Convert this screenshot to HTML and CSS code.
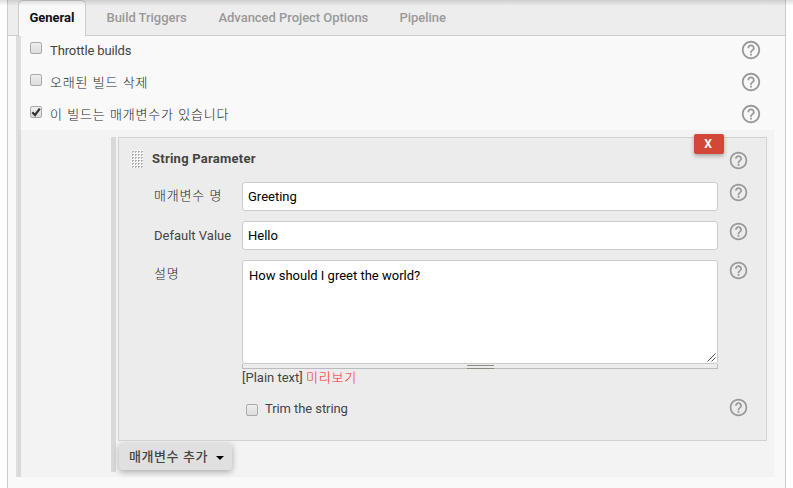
FILE: index.html
```
<!DOCTYPE html>
<html lang="ko">
<head>
<meta charset="utf-8">
<title>Config</title>
<link rel="stylesheet" href="styles.css">
</head>
<body>
<svg class="defs" width="0" height="0"><symbol id="help" viewBox="0 0 24 24"><path d="M11 18h2v-2h-2v2zm1-16C6.48 2 2 6.48 2 12s4.48 10 10 10 10-4.48 10-10S17.52 2 12 2zm0 18c-4.41 0-8-3.59-8-8s3.59-8 8-8 8 3.59 8 8-3.59 8-8 8zm0-14c-2.21 0-4 1.79-4 4h2c0-1.1.9-2 2-2s2 .9 2 2c0 2-3 1.75-3 5h2c0-2.25 3-2.5 3-5 0-2.21-1.79-4-4-4z"/></symbol></svg>
<div class="panel">
  <nav class="tabs">
    <a class="tab active">General</a>
    <a class="tab triggers">Build Triggers</a>
    <a class="tab advanced">Advanced Project Options</a>
    <a class="tab">Pipeline</a>
  </nav>
  <main class="config">
    <div class="option"><span class="check"></span><span class="name throttle">Throttle builds</span><svg class="help"><use href="#help"/></svg></div>
    <div class="option"><span class="check"></span><span class="name ko">오래된 빌드 삭제</span><svg class="help"><use href="#help"/></svg></div>
    <div class="option"><span class="check"><svg viewBox="0 0 10 10"><path d="M1.3 5.3 4 8 8.8 1.7"/></svg></span><span class="name ko">이 빌드는 매개변수가 있습니다</span><svg class="help"><use href="#help"/></svg></div>
    <section class="nested">
      <div class="bar"></div>
      <div class="content">
        <div class="card">
          <button class="delete">X</button>
          <div class="row heading"><span class="grip"></span><b>String Parameter</b><svg class="help"><use href="#help"/></svg></div>
          <div class="row"><label class="ko">매개변수 명</label><div class="field">Greeting</div><svg class="help"><use href="#help"/></svg></div>
          <div class="row"><label class="latin">Default Value</label><div class="field">Hello</div><svg class="help"><use href="#help"/></svg></div>
          <div class="row desc"><label class="ko">설명</label>
            <div class="editor">
              <div class="field area">How should I greet the world?<svg class="resize" viewBox="0 0 9 9"><path d="M.5 8.5l8-8M4.5 8.5l4-4"/></svg></div>
              <div class="handle"><i></i></div>
              <div class="preview">[Plain text] <a class="ko">미리보기</a></div>
            </div>
            <svg class="help"><use href="#help"/></svg></div>
          <div class="row trim"><span class="check"></span><span class="name">Trim the string</span><svg class="help"><use href="#help"/></svg></div>
        </div>
        <button class="add"><span class="ko">매개변수 추가</span><i></i></button>
      </div>
    </section>
  </main>
</div>
</body>
</html>
```
FILE: styles.css
```
* { box-sizing: border-box; }
body { margin: 0; height: 488px; overflow: hidden; background: #fff; color: #444; font: 13px/18px Roboto, "Noto Sans CJK KR", sans-serif; }
body::before { content: ""; position: absolute; inset: 0 0 auto; height: 6px; background: linear-gradient(rgba(0,0,0,.13), rgba(0,0,0,0)); z-index: 3; }
.defs { display: none; }
.panel { margin-left: 7px; width: 779px; height: 488px; background: #f9f9f9; border: 1px solid #ccc; border-width: 0 1px; }
.tabs { display: flex; height: 36px; background: #ededed; border-bottom: 1px solid #ccc; padding-left: 10px; }
.tab { color: #999; font-weight: 500; line-height: 35px; letter-spacing: -.04px; }
.active { width: 68px; height: 36px; padding-left: 10.5px; margin-right: 20.5px; background: #f9f9f9; color: #111; font-weight: 700; border: 1px solid #ccc; border-bottom: 0; border-radius: 5px 5px 0 0; line-height: 33px; }
.triggers { width: 112px; }
.advanced { width: 181px; }
.config { width: 758px; height: 441px; margin-left: 8px; border-left: 5px solid #dedede; }
.option { display: flex; height: 32px; align-items: flex-start; padding-left: 9px; }
.option:nth-child(3) { height: 30px; }
.check { flex: none; width: 12px; height: 12px; margin-top: 6px; border: 1px solid #aaa; border-radius: 2px; background: linear-gradient(#eee, #dcdcdc); }
.check svg { display: block; width: 10px; height: 10px; fill: none; stroke: #333; stroke-width: 2.2; }
.name { margin: 6px 0 0 8px; white-space: nowrap; }
.throttle { letter-spacing: -.12px; }
.ko { font-family: "Noto Sans CJK KR", sans-serif; font-weight: 300; white-space: nowrap; letter-spacing: .8px; color: #1c1c1c; }
.name.ko { margin-top: 5px; }
.help { flex: none; width: 22px; height: 22px; fill: #999; margin: 3px 12px 0 auto; }
.nested { display: flex; width: 756px; height: 347px; margin-left: -3px; padding: 7px 7px 0 90px; background: #f3f3f3; border-left: 3px solid #d9d9d9; }
.bar { width: 5px; height: 335px; background: #d9d9d9; margin-right: 2px; }
.card { position: relative; width: 649px; height: 304px; background: #ececec; border: 1px solid #d2d2d2; }
.row { display: flex; height: 39px; padding-left: 35px; }
.row .help { width: 21px; height: 21px; margin: 0 17.5px 0 auto; }
.row label { width: 88px; padding-top: 4px; }
.row .latin { padding-top: 6px; }
.heading { height: 44px; padding: 12px 0 0 12px; }
.heading b { margin-left: 9px; font-weight: 700; letter-spacing: .25px; }
.grip { width: 12px; height: 18px; background: radial-gradient(circle at 1.7px 1.7px, #aaa .8px, #f8f8f8 1px) 0 0 / 3px 3px; }
.field { width: 476px; height: 29px; padding: 5px; background: #fff; border: 1px solid #ccc; border-radius: 3px; color: #000; }
.area { position: relative; height: 104px; padding: 6px; }
.resize { position: absolute; right: 1px; bottom: 1px; width: 9px; height: 9px; stroke: #555; fill: none; }
.handle { height: 5px; border: 1px solid #bbb; border-top: 0; display: flex; justify-content: center; }
.handle i { width: 27px; height: 4px; border: 1px solid #8b8b83; border-width: 1px 0; margin-top: 1px; }
.desc { height: 137px; }
.preview { height: 18px; line-height: 16px; }
.preview a { color: #f22; }
.trim { padding-left: 127px; height: 30px; }
.trim .check { margin-top: 7px; }
.trim .name { margin: 3px 0 0 7px; letter-spacing: -.08px; }
.delete { position: absolute; left: 575px; top: -4px; width: 30px; height: 20px; padding: 0 2px 0 0; border: 0; border-radius: 2px; background: #d34739; color: #fff; font: 700 12px/20px Roboto; box-shadow: 0 2px 4px rgba(0,0,0,.3); }
.add { display: flex; align-items: center; width: 113px; height: 27px; margin: 2px 0 0 1px; padding: 0 0 2px 10px; border: 0; border-radius: 4px; background: #e0e0e0; color: #333; font-size: 13px; box-shadow: 0 2px 6px rgba(0,0,0,.3); }
.add .ko { font-weight: 500; letter-spacing: .5px; color: #444; }
.add i { border: 4px solid transparent; border-top-color: #000; border-bottom: 0; margin: 4px 0 0 8px; }
```
